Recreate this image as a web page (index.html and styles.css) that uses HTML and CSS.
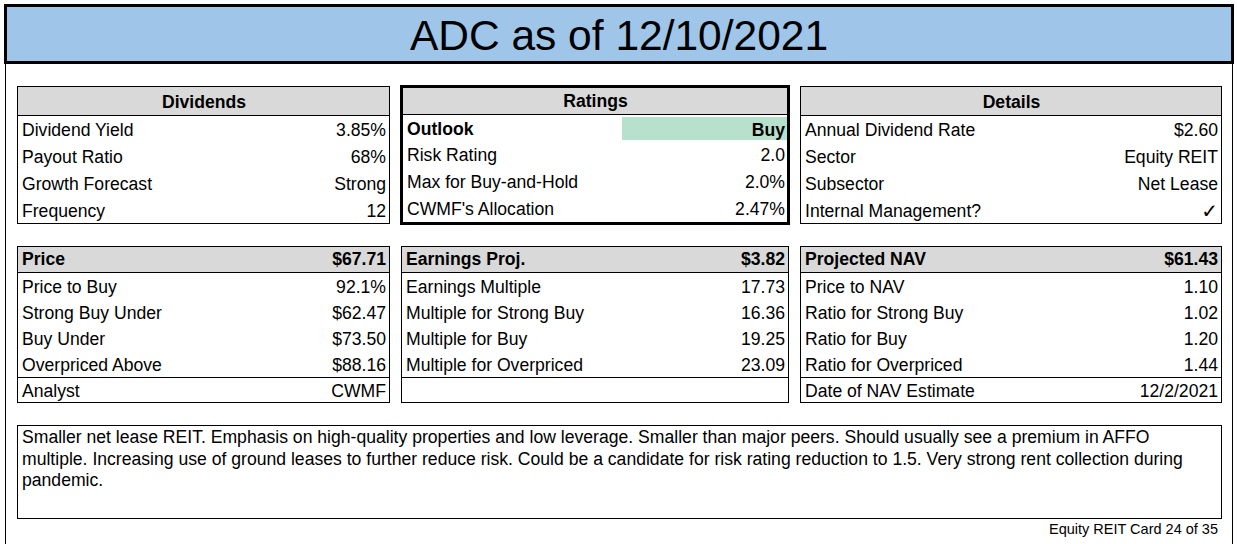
FILE: index.html
```html
<!DOCTYPE html>
<html>
<head>
<meta charset="utf-8">
<link rel="stylesheet" href="styles.css">
</head>
<body>
<div class="card">
  <div class="title">ADC as of 12/10/2021</div>
  <div class="frame">
    <div class="grid top">
      <div class="box">
        <div class="head center">Dividends</div>
        <div class="rows">
          <div class="row"><span>Dividend Yield</span><span>3.85%</span></div>
          <div class="row"><span>Payout Ratio</span><span>68%</span></div>
          <div class="row"><span>Growth Forecast</span><span>Strong</span></div>
          <div class="row"><span>Frequency</span><span>12</span></div>
        </div>
      </div>
      <div class="box thick">
        <div class="head center">Ratings</div>
        <div class="rows">
          <div class="row bold"><span>Outlook</span><span class="val green">Buy</span></div>
          <div class="row"><span>Risk Rating</span><span>2.0</span></div>
          <div class="row"><span>Max for Buy-and-Hold</span><span>2.0%</span></div>
          <div class="row"><span>CWMF's Allocation</span><span>2.47%</span></div>
        </div>
      </div>
      <div class="box">
        <div class="head center">Details</div>
        <div class="rows">
          <div class="row"><span>Annual Dividend Rate</span><span>$2.60</span></div>
          <div class="row"><span>Sector</span><span>Equity REIT</span></div>
          <div class="row"><span>Subsector</span><span>Net Lease</span></div>
          <div class="row"><span>Internal Management?</span><span class="check">✓</span></div>
        </div>
      </div>
    </div>
    <div class="grid mid">
      <div class="box">
        <div class="head split"><span>Price</span><span>$67.71</span></div>
        <div class="rows">
          <div class="row"><span>Price to Buy</span><span>92.1%</span></div>
          <div class="row"><span>Strong Buy Under</span><span>$62.47</span></div>
          <div class="row"><span>Buy Under</span><span>$73.50</span></div>
          <div class="row"><span>Overpriced Above</span><span>$88.16</span></div>
        </div>
        <div class="row foot"><span>Analyst</span><span>CWMF</span></div>
      </div>
      <div class="box">
        <div class="head split"><span>Earnings Proj.</span><span>$3.82</span></div>
        <div class="rows">
          <div class="row"><span>Earnings Multiple</span><span>17.73</span></div>
          <div class="row"><span>Multiple for Strong Buy</span><span>16.36</span></div>
          <div class="row"><span>Multiple for Buy</span><span>19.25</span></div>
          <div class="row"><span>Multiple for Overpriced</span><span>23.09</span></div>
        </div>
        <div class="row foot"><span></span><span></span></div>
      </div>
      <div class="box">
        <div class="head split"><span>Projected NAV</span><span>$61.43</span></div>
        <div class="rows">
          <div class="row"><span>Price to NAV</span><span>1.10</span></div>
          <div class="row"><span>Ratio for Strong Buy</span><span>1.02</span></div>
          <div class="row"><span>Ratio for Buy</span><span>1.20</span></div>
          <div class="row"><span>Ratio for Overpriced</span><span>1.44</span></div>
        </div>
        <div class="row foot"><span>Date of NAV Estimate</span><span>12/2/2021</span></div>
      </div>
    </div>
    <div class="note">Smaller net lease REIT. Emphasis on high-quality properties and low leverage. Smaller than major peers. Should usually see a premium in AFFO multiple. Increasing use of ground leases to further reduce risk. Could be a candidate for risk rating reduction to 1.5. Very strong rent collection during pandemic.</div>
    <div class="footer">Equity REIT Card 24 of 35</div>
  </div>
</div>
</body>
</html>
```

FILE: styles.css
```css
html, body {
  margin: 0;
  padding: 0;
  background: #ffffff;
}

body {
  font-family: "Liberation Sans", Arial, sans-serif;
  font-size: 17.6px;
  color: #000000;
}

.card {
  width: 1230px;
  margin: 4px 0 0 4px;
}

.title {
  height: 54px;
  border: 3px solid #000000;
  background: #9fc5e8;
  font-size: 42.5px;
  line-height: 57px;
  text-align: center;
}

.frame {
  margin: 0 1px;
  border: 1px solid #000000;
  border-top: none;
  padding: 22px 10px 0 11px;
  height: 475px;
  box-sizing: content-box;
}

.grid {
  display: grid;
  grid-template-columns: 373px 388px 422px;
  column-gap: 11px;
}

.grid.top {
  height: 138px;
}

.grid.mid {
  height: 157px;
  margin-top: 22px;
}

.box {
  border: 1px solid #000000;
  display: flex;
  flex-direction: column;
  box-sizing: border-box;
}

.box.thick {
  border: 3px solid #000000;
  margin: -1px;
}

.head {
  background: #d9d9d9;
  font-weight: bold;
  border-bottom: 1px solid #000000;
  height: 28px;
  line-height: 30px;
  padding: 0 3px 0 4px;
}

.thick .head {
  height: 26px;
  line-height: 26px;
}

.mid .head {
  height: 25px;
  line-height: 25px;
}

.head.center {
  text-align: center;
}

.head.split {
  display: flex;
  justify-content: space-between;
}

.rows {
  flex: 1;
  display: flex;
  flex-direction: column;
}

.row {
  flex: 1;
  display: flex;
  justify-content: space-between;
  align-items: center;
  padding: 2px 3px 0 4px;
  line-height: 20px;
}

.mid .row {
  padding-top: 1px;
}

.mid .rows {
  flex: 0 0 104px;
}

.row.foot {
  flex: 1;
  border-top: 1px solid #000000;
}

.row.bold {
  font-weight: bold;
  padding-top: 0;
  padding-right: 0;
  align-items: stretch;
}

.row.bold span:first-child {
  display: flex;
  align-items: center;
  padding-top: 3px;
}

.val.green {
  background: #b7e1cd;
  width: 165px;
  text-align: right;
  padding: 3px 2px 0 0;
  box-sizing: border-box;
  display: flex;
  align-items: center;
  justify-content: flex-end;
  margin-top: 2px;
}

.thick .row {
  padding-right: 2px;
}

.thick .row.bold {
  padding-right: 0;
}

.check {
  font-family: "DejaVu Sans", sans-serif;
  font-size: 20px;
}

.note {
  margin-top: 22px;
  height: 91px;
  border: 1px solid #000000;
  padding: 1px 10px 0 4px;
  line-height: 21.5px;
}

.footer {
  text-align: right;
  font-size: 14.5px;
  line-height: 21px;
  padding-right: 4px;
}
```
